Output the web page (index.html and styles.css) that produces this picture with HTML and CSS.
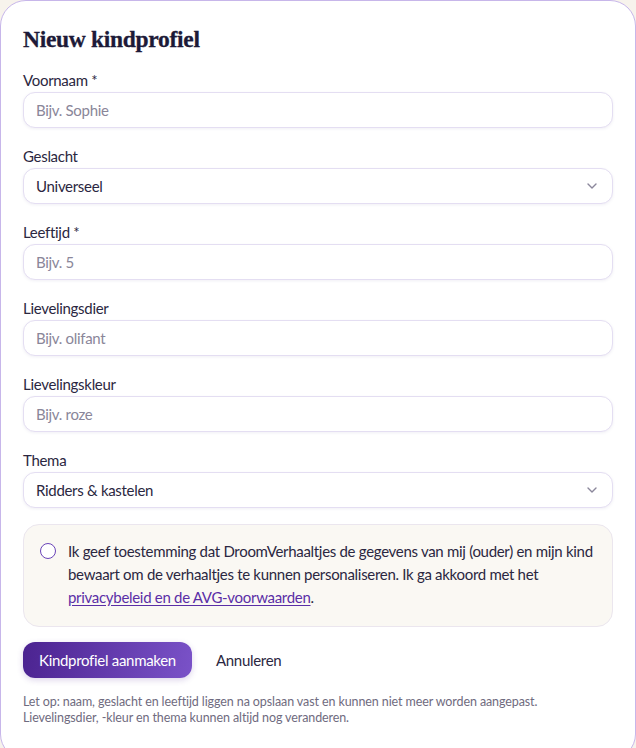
FILE: index.html
```html
<!DOCTYPE html>
<html lang="nl">
<head>
  <meta charset="UTF-8" />
  <meta name="viewport" content="width=device-width, initial-scale=1.0"/>
  <title>Nieuw kindprofiel</title>
  <link rel="stylesheet" href="styles.css">
</head>
<body>

<div class="modal">
  <h2 class="modal-title">Nieuw kindprofiel</h2>

  <form class="profile-form" onsubmit="return false">
    <div class="field">
      <label for="name">Voornaam *</label>
      <input id="name" type="text" placeholder="Bijv. Sophie">
    </div>

    <div class="field">
      <label for="gender">Geslacht</label>
      <div class="select-wrap">
        <select id="gender">
          <option>Universeel</option>
          <option>Jongen</option>
          <option>Meisje</option>
        </select>
        <svg class="chevron" width="10" height="6" viewBox="0 0 10 6"><path d="M1 1 5 5l4-4" fill="none" stroke="#8b879b" stroke-width="1.4" stroke-linecap="round" stroke-linejoin="round"/></svg>
      </div>
    </div>

    <div class="field">
      <label for="age">Leeftijd *</label>
      <input id="age" type="text" placeholder="Bijv. 5">
    </div>

    <div class="field">
      <label for="animal">Lievelingsdier</label>
      <input id="animal" type="text" placeholder="Bijv. olifant">
    </div>

    <div class="field">
      <label for="color">Lievelingskleur</label>
      <input id="color" type="text" placeholder="Bijv. roze">
    </div>

    <div class="field">
      <label for="theme">Thema</label>
      <div class="select-wrap">
        <select id="theme">
          <option>Ridders &amp; kastelen</option>
          <option>Ruimte</option>
          <option>Dieren</option>
        </select>
        <svg class="chevron" width="10" height="6" viewBox="0 0 10 6"><path d="M1 1 5 5l4-4" fill="none" stroke="#8b879b" stroke-width="1.4" stroke-linecap="round" stroke-linejoin="round"/></svg>
      </div>
    </div>

    <label class="consent">
      <input type="checkbox" class="consent-check">
      <span>Ik geef toestemming dat DroomVerhaaltjes de gegevens van mij (ouder) en mijn kind bewaart om de verhaaltjes te kunnen personaliseren. Ik ga akkoord met het <a href="#">privacybeleid en de AVG-voorwaarden</a>.</span>
    </label>

    <div class="actions">
      <button type="submit" class="btn-primary">Kindprofiel aanmaken</button>
      <button type="button" class="btn-ghost">Annuleren</button>
    </div>

    <p class="note">Let op: naam, geslacht en leeftijd liggen na opslaan vast en kunnen niet meer worden aangepast. Lievelingsdier, -kleur en thema kunnen altijd nog veranderen.</p>
  </form>
</div>

</body>
</html>
```

FILE: styles.css
```css
:root {
  --ink: #1d1a38;
  --text: #2b2741;
  --muted: #6f6b80;
  --placeholder: #8a8699;
  --line: #e4def2;
  --purple: #5a2ea6;
}

body {
  margin: 0;
  background: #f7f3ec;
  font-family: 'Lato', 'Noto Sans', sans-serif;
  color: var(--text);
  letter-spacing: -0.3px;
}

.modal {
  box-sizing: border-box;
  width: 636px;
  height: 760px;
  background: #fff;
  border: 1px solid #c7b6ea;
  border-radius: 26px;
  padding: 24px 22px 0;
}

.modal-title {
  margin: 0 0 17px;
  font-family: 'Liberation Serif', 'DejaVu Serif', serif;
  font-size: 23.5px;
  line-height: 28px;
  font-weight: 700;
  color: var(--ink);
  letter-spacing: -0.3px;
  -webkit-text-stroke: 0.3px var(--ink);
}

.field {
  display: flex;
  flex-direction: column;
  gap: 2px;
  margin-bottom: 18px;
}

.field label {
  font-size: 15px;
  line-height: 20px;
}

.field input,
.field select {
  box-sizing: border-box;
  width: 100%;
  height: 36px;
  padding: 0 12px;
  border: 1px solid var(--line);
  border-radius: 12px;
  background: #fff;
  box-shadow: 0 1px 3px rgba(70, 50, 130, 0.08);
  font-family: inherit;
  font-size: 15px;
  letter-spacing: -0.3px;
  color: var(--text);
  outline: none;
}

.field input::placeholder {
  color: var(--placeholder);
}

.select-wrap {
  position: relative;
}

.field select {
  appearance: none;
  -webkit-appearance: none;
}

.chevron {
  position: absolute;
  right: 16px;
  top: 15px;
  pointer-events: none;
}

.consent {
  display: flex;
  gap: 12px;
  align-items: flex-start;
  padding: 15px 16px 17px;
  margin-top: -2px;
  background: #faf8f3;
  border: 1px solid #ebe6ee;
  border-radius: 16px;
  font-size: 15px;
  line-height: 23px;
}

.consent-check {
  appearance: none;
  -webkit-appearance: none;
  flex: none;
  box-sizing: border-box;
  width: 16px;
  height: 16px;
  margin: 3px 0 0;
  border: 1.5px solid #6a44b8;
  border-radius: 50%;
  background: #fff;
}

.consent a {
  color: var(--purple);
  text-decoration: underline;
  text-underline-offset: 2px;
}

.actions {
  display: flex;
  align-items: center;
  gap: 8px;
  margin-top: 15px;
}

.btn-primary {
  height: 36px;
  padding: 0 16px;
  border: none;
  border-radius: 12px;
  background: linear-gradient(100deg, #4b2390, #7a52c8);
  box-shadow: 0 2px 6px rgba(80, 40, 150, 0.2);
  color: #fff;
  font-family: inherit;
  font-size: 15px;
  letter-spacing: -0.3px;
  cursor: pointer;
}

.btn-ghost {
  height: 36px;
  padding: 0 16px;
  border: none;
  background: none;
  color: var(--text);
  font-family: inherit;
  font-size: 15px;
  letter-spacing: -0.3px;
  cursor: pointer;
}

.note {
  margin: 16px 0 0;
  font-size: 12.5px;
  line-height: 16px;
  letter-spacing: -0.1px;
  color: var(--muted);
}
```
